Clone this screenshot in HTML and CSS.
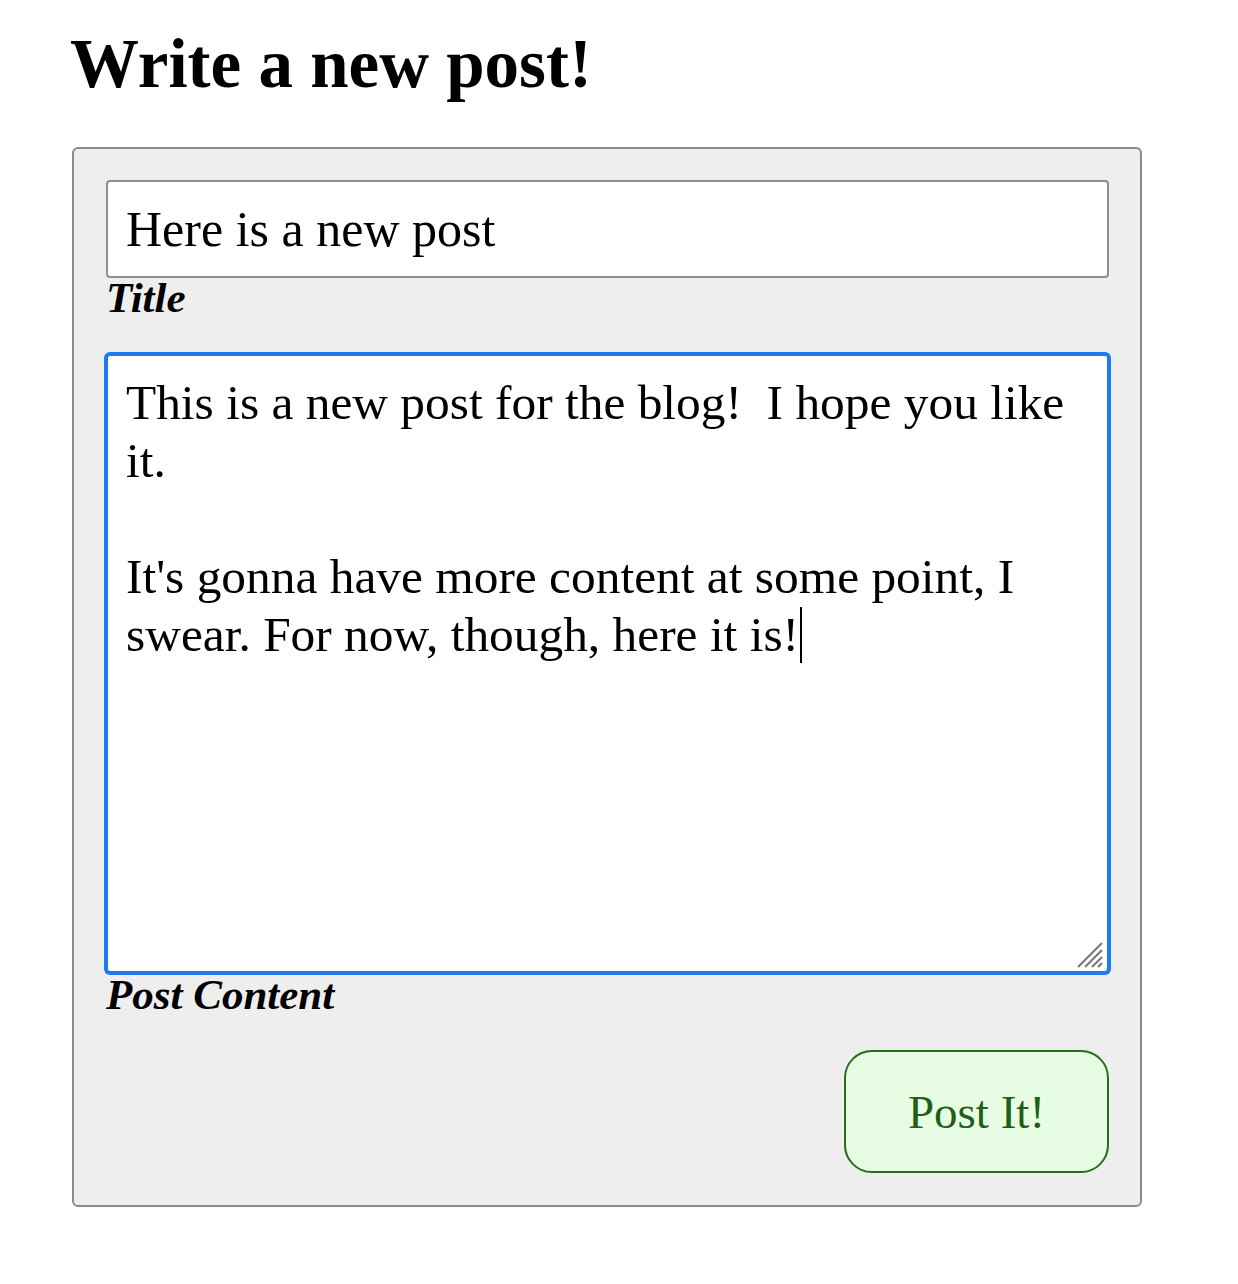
FILE: index.html
```html
<!DOCTYPE html>
<html lang="en">
<head>
<meta charset="utf-8">
<title>Write a new post!</title>
<link rel="stylesheet" href="styles.css">
</head>
<body>
<main class="page">
  <h1 class="heading">Write a new post!</h1>
  <form class="card">
    <div class="field">
      <div class="input">Here is a new post</div>
      <label class="label">Title</label>
    </div>
    <div class="field">
      <div class="textarea">
        <p class="line">This is a new post for the blog!&nbsp; I hope you like</p>
        <p class="line">it.</p>
        <p class="line">&nbsp;</p>
        <p class="line">It's gonna have more content at some point, I</p>
        <p class="line">swear. For now, though, here it is!<span class="caret"></span></p>
        <svg class="grip" width="26" height="26" viewBox="0 0 26 26">
          <path d="M1 25 L25 1 M8 25 L25 8 M15 25 L25 15 M21 25 L25 21" stroke="#777" stroke-width="2" fill="none"/>
        </svg>
      </div>
      <label class="label label-content">Post Content</label>
    </div>
    <div class="actions">
      <button type="button" class="btn">Post It!</button>
    </div>
  </form>
</main>
</body>
</html>
```
FILE: styles.css
```css
* { box-sizing: border-box; }
html, body { margin: 0; padding: 0; background: #fff; }
body { font-family: "Liberation Serif", "Times New Roman", serif; color: #000; }

.page {
  padding: 26px 0 0 72px;
  width: 1142px;
}

.heading {
  margin: 0 0 45px -2px;
  font-size: 69px;
  line-height: 76px;
  font-weight: 700;
}

.card {
  width: 1070px;
  height: 1060px;
  background: #eeeeee;
  border: 2px solid #8a8a8a;
  border-radius: 6px;
  padding: 31px 31px 32px 32px;
  display: flex;
  flex-direction: column;
}

.field { display: flex; flex-direction: column; }

.input {
  height: 98px;
  background: #fff;
  border: 2px solid #8e8e94;
  border-radius: 4px;
  padding: 0 18px;
  font-size: 50px;
  line-height: 94px;
}

.label {
  display: block;
  font-weight: 700;
  font-style: italic;
  font-size: 43px;
  line-height: 40px;
  margin-top: 0;
  margin-bottom: 34px;
}

.label-content {
  margin-top: 2px;
  margin-bottom: 0;
}

.textarea {
  position: relative;
  margin-top: 2px;
  height: 619px;
  background: #fff;
  border: 2px solid #1b7cf2;
  box-shadow: 0 0 0 2px #1b7cf2;
  border-radius: 4px;
  padding: 18px 18px 0 18px;
  font-size: 49.4px;
  line-height: 58px;
}

.line { margin: 0; white-space: pre; }

.caret {
  display: inline-block;
  width: 2px;
  height: 56px;
  margin-left: 1px;
  background: #000;
  vertical-align: -12px;
}

.grip {
  position: absolute;
  right: 4px;
  bottom: 3px;
}

.actions {
  display: flex;
  justify-content: flex-end;
  margin-top: auto;
}

.btn {
  width: 265px;
  height: 123px;
  background: #e6fde4;
  border: 2px solid #2a6a1e;
  border-radius: 28px;
  font-family: "Liberation Serif", "Times New Roman", serif;
  font-size: 47px;
  color: #225e15;
  padding: 0;
}
```
